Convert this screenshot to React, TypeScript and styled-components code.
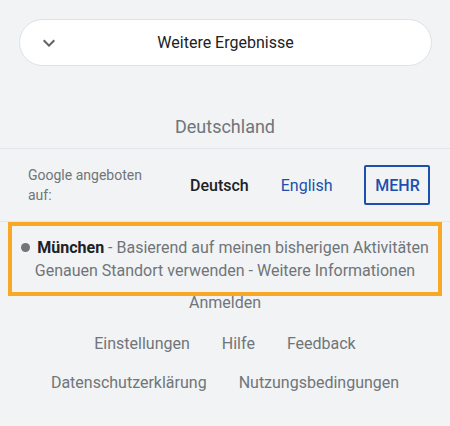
import React from 'react'
import styled, { createGlobalStyle } from 'styled-components'

const GlobalStyle = createGlobalStyle`
  body {
    margin: 0;
    background: #f1f3f4;
    font-family: Roboto, 'Liberation Sans', Arial, sans-serif;
  }
`

const Page = styled.div`
  padding-top: 19px;
  min-height: 426px;
  box-sizing: border-box;
`

const MoreButton = styled.div`
  margin: 0 18px 0 19px;
  height: 47px;
  box-sizing: border-box;
  border: 1px solid #dfe1e5;
  border-radius: 24px;
  background: #ffffff;
  display: grid;
  grid-template-columns: 58px 1fr 58px;
  align-items: center;
  color: #202124;
  font-size: 16px;
`

const Chevron = styled.div`
  display: flex;
  justify-content: center;
  align-items: center;
`

const ButtonLabel = styled.span`
  text-align: center;
`

const Country = styled.div`
  margin-top: 51px;
  padding-bottom: 11px;
  line-height: 20px;
  font-size: 18px;
  color: #70757a;
  text-align: center;
  border-bottom: 1px solid #e3e5e8;
`

const LanguageRow = styled.div`
  height: 73px;
  box-sizing: border-box;
  display: flex;
  align-items: center;
  padding-left: 28px;
  border-bottom: 1px solid #e3e5e8;
`

const OfferedLabel = styled.div`
  width: 130px;
  font-size: 14px;
  line-height: 20px;
  color: #70757a;
`

const Lang = styled.span<{ $active?: boolean }>`
  margin-left: 32px;
  font-size: 16px;
  font-weight: ${({ $active }) => ($active ? 500 : 400)};
  color: ${({ $active }) => ($active ? '#202124' : '#1c50ad')};
`

const MoreLangs = styled.div`
  margin-left: 32px;
  width: 66px;
  height: 40px;
  box-sizing: border-box;
  border: 2px solid #1c50ad;
  border-radius: 2px;
  display: flex;
  align-items: center;
  justify-content: center;
  font-size: 16px;
  font-weight: 500;
  color: #1c50ad;
`

const Location = styled.div`
  position: relative;
  padding: 14px 0 9px;
  text-align: center;
  font-size: 16px;
  line-height: 23px;
  color: #70757a;
`

const Dot = styled.span`
  display: inline-block;
  width: 9px;
  height: 9px;
  border-radius: 50%;
  background: #70757a;
  margin-right: 7px;
  vertical-align: 1px;
`

const City = styled.b`
  color: #202124;
  font-weight: 700;
`

const Highlight = styled.div`
  position: absolute;
  top: 0;
  bottom: -5px;
  left: 8px;
  right: 8px;
  border: 4px solid #f9a825;
  pointer-events: none;
`

const FooterLinks = styled.div`
  display: flex;
  flex-direction: column;
  gap: 16px;
  font-size: 16px;
  line-height: 23px;
  color: #70757a;
`

const LinkRow = styled.div<{ $spaced?: boolean }>`
  display: flex;
  justify-content: center;
  gap: 32px;
  margin-bottom: ${({ $spaced }) => ($spaced ? '2px' : '0')};
`

export default function App() {
  return (
    <>
      <GlobalStyle />
      <Page>
        <MoreButton>
          <Chevron>
            <svg width="24" height="24" viewBox="0 0 24 24" fill="#5f6368">
              <path d="M7.41 8.59L12 13.17l4.59-4.58L18 10l-6 6-6-6 1.41-1.41z" />
            </svg>
          </Chevron>
          <ButtonLabel>Weitere Ergebnisse</ButtonLabel>
        </MoreButton>
        <Country>Deutschland</Country>
        <LanguageRow>
          <OfferedLabel>Google angeboten auf:</OfferedLabel>
          <Lang $active>Deutsch</Lang>
          <Lang>English</Lang>
          <MoreLangs>MEHR</MoreLangs>
        </LanguageRow>
        <Location>
          <div>
            <Dot />
            <City>München</City> - Basierend auf meinen bisherigen Aktivitäten
          </div>
          <div>Genauen Standort verwenden - Weitere Informationen</div>
          <Highlight />
        </Location>
        <FooterLinks>
          <LinkRow $spaced>Anmelden</LinkRow>
          <LinkRow>
            <span>Einstellungen</span>
            <span>Hilfe</span>
            <span>Feedback</span>
          </LinkRow>
          <LinkRow>
            <span>Datenschutzerklärung</span>
            <span>Nutzungsbedingungen</span>
          </LinkRow>
        </FooterLinks>
      </Page>
    </>
  )
}
